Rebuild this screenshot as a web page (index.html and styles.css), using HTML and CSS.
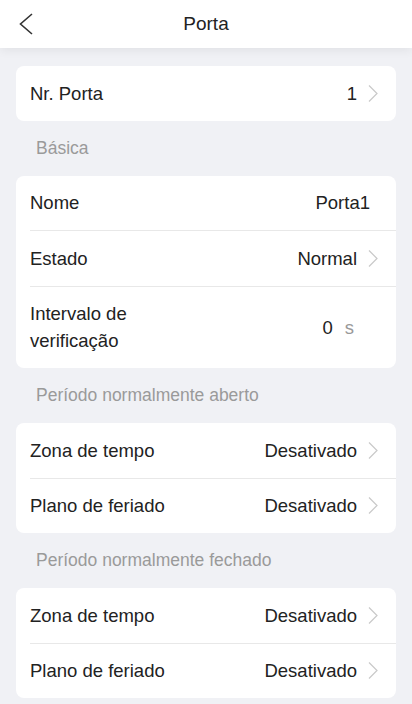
FILE: index.html
```html
<!DOCTYPE html>
<html lang="pt">
<head>
<meta charset="utf-8">
<title>Porta</title>
<link rel="stylesheet" href="styles.css">
</head>
<body>
<header class="topbar">
  <button class="back" aria-label="Voltar">
    <svg width="14" height="22" viewBox="0 0 14 22"><polyline points="13,1 1.5,11 13,21" fill="none" stroke="#333" stroke-width="1.6" stroke-linejoin="miter"/></svg>
  </button>
  <h1 class="title">Porta</h1>
</header>

<main class="content">
  <section class="card">
    <div class="row">
      <span class="label">Nr. Porta</span>
      <span class="value">1</span>
      <svg class="chev" width="10" height="17" viewBox="0 0 10 17"><polyline points="1,0.5 9,8.5 1,16.5" fill="none" stroke="#c9c9c9" stroke-width="1.2"/></svg>
    </div>
  </section>

  <h2 class="section">Básica</h2>
  <section class="card">
    <div class="row plain">
      <span class="label">Nome</span>
      <span class="value">Porta1</span>
    </div>
    <div class="row">
      <span class="label">Estado</span>
      <span class="value">Normal</span>
      <svg class="chev" width="10" height="17" viewBox="0 0 10 17"><polyline points="1,0.5 9,8.5 1,16.5" fill="none" stroke="#c9c9c9" stroke-width="1.2"/></svg>
    </div>
    <div class="row input">
      <span class="label narrow">Intervalo de verificação</span>
      <span class="value">0</span>
      <span class="unit">s</span>
    </div>
  </section>

  <h2 class="section">Período normalmente aberto</h2>
  <section class="card">
    <div class="row">
      <span class="label">Zona de tempo</span>
      <span class="value">Desativado</span>
      <svg class="chev" width="10" height="17" viewBox="0 0 10 17"><polyline points="1,0.5 9,8.5 1,16.5" fill="none" stroke="#c9c9c9" stroke-width="1.2"/></svg>
    </div>
    <div class="row">
      <span class="label">Plano de feriado</span>
      <span class="value">Desativado</span>
      <svg class="chev" width="10" height="17" viewBox="0 0 10 17"><polyline points="1,0.5 9,8.5 1,16.5" fill="none" stroke="#c9c9c9" stroke-width="1.2"/></svg>
    </div>
  </section>

  <h2 class="section">Período normalmente fechado</h2>
  <section class="card">
    <div class="row">
      <span class="label">Zona de tempo</span>
      <span class="value">Desativado</span>
      <svg class="chev" width="10" height="17" viewBox="0 0 10 17"><polyline points="1,0.5 9,8.5 1,16.5" fill="none" stroke="#c9c9c9" stroke-width="1.2"/></svg>
    </div>
    <div class="row">
      <span class="label">Plano de feriado</span>
      <span class="value">Desativado</span>
      <svg class="chev" width="10" height="17" viewBox="0 0 10 17"><polyline points="1,0.5 9,8.5 1,16.5" fill="none" stroke="#c9c9c9" stroke-width="1.2"/></svg>
    </div>
  </section>
</main>
</body>
</html>
```

FILE: styles.css
```css
* { box-sizing: border-box; }

html, body {
  margin: 0;
  padding: 0;
  background: #f0f1f5;
  font-family: "Liberation Sans", Arial, sans-serif;
  color: #222;
}

.topbar {
  position: relative;
  height: 48px;
  background: #fff;
  display: flex;
  align-items: center;
  justify-content: center;
  box-shadow: 0 2px 10px rgba(0, 0, 0, 0.07);
}

.back {
  position: absolute;
  left: 19px;
  top: 13px;
  padding: 0;
  margin: 0;
  border: 0;
  background: none;
  display: flex;
}

.title {
  margin: 0;
  font-size: 19px;
  font-weight: normal;
  color: #222;
  line-height: 48px;
}

.content {
  padding: 18px 16px 8px;
}

.card {
  background: #fff;
  border-radius: 8px;
  padding-left: 14px;
}

.row {
  display: flex;
  align-items: center;
  min-height: 54.5px;
  padding: 13.75px 18px 13.75px 0;
  font-size: 18.5px;
  line-height: 27px;
}

.row + .row {
  border-top: 1px solid #e8e8e8;
}

.row.plain {
  padding-right: 26px;
}

.row.input {
  padding-right: 42px;
}

.label {
  flex: 1;
}

.label.narrow {
  max-width: 135px;
}

.value {
  margin-left: auto;
}

.chev {
  margin-left: 11px;
  flex: none;
}

.unit {
  margin-left: 12px;
  color: #999;
}

.section {
  margin: 0;
  padding: 16px 20px 16px;
  font-size: 17.5px;
  line-height: 23px;
  font-weight: normal;
  color: #9a9a9a;
}

.card + .section + .card,
.section {
  flex: none;
}
```
